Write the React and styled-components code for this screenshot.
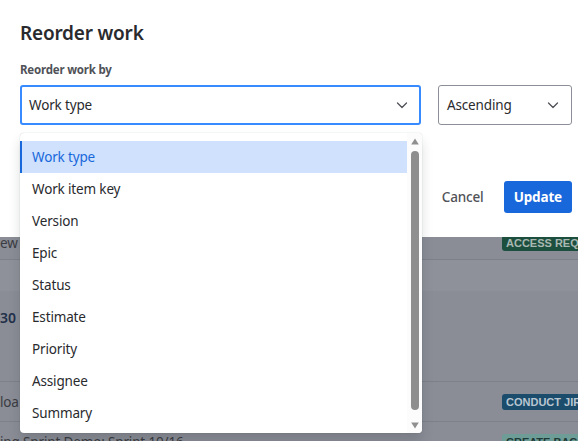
import React from 'react'
import styled, { createGlobalStyle } from 'styled-components'

const GlobalStyle = createGlobalStyle`
  html, body { margin: 0; padding: 0; }
  body {
    font-family: "Noto Sans", "Open Sans", sans-serif;
    color: #292a2e;
  }
  * { box-sizing: border-box; }
`

const fields = [
  'Work type',
  'Work item key',
  'Version',
  'Epic',
  'Status',
  'Estimate',
  'Priority',
  'Assignee',
  'Summary',
]

const Chevron = () => (
  <svg width="12" height="12" viewBox="0 0 12 12" fill="none">
    <path d="M1.5 4l4.5 4.5L10.5 4" stroke="#505258" strokeWidth="1.3" strokeLinecap="round" strokeLinejoin="round" />
  </svg>
)

const Arrow = ({ down }) => (
  <svg width="8" height="7" viewBox="0 0 8 7" style={down ? { transform: 'rotate(180deg)' } : undefined}>
    <path d="M4 0.5L7.8 6.5H0.2z" fill="#8f8f8f" />
  </svg>
)

export default function App() {
  return (
    <>
      <GlobalStyle />
      <Page>
        <Board>
          <Row h={34}>
            <Summary>ew b</Summary>
            <Badge tone="green">ACCESS REQU</Badge>
          </Row>
          <Row h={122} tall>
            <Band />
            <Body>
              <Key>30</Key>
            </Body>
          </Row>
          <Row h={40}>
            <Summary>loa</Summary>
            <Badge tone="blue">CONDUCT JIR</Badge>
          </Row>
          <Row h={40}>
            <Summary>ing Sprint Demo: Sprint 10/16</Summary>
            <Badge tone="teal">CREATE BAC</Badge>
          </Row>
        </Board>

        <Modal>
          <Title>Reorder work</Title>
          <Label>Reorder work by</Label>
          <Fields>
            <Select width={401} focused>
              <span>Work type</span>
              <IconSlot><Chevron /></IconSlot>
            </Select>
            <Select width={134}>
              <span>Ascending</span>
              <IconSlot><Chevron /></IconSlot>
            </Select>
          </Fields>
          <Actions>
            <Button>Cancel</Button>
            <Button primary>Update</Button>
          </Actions>
        </Modal>

        <Menu>
          <List>
            {fields.map((f, i) => (
              <Option key={f} selected={i === 0}>{f}</Option>
            ))}
          </List>
          <Scrollbar>
            <Arrow />
            <Thumb />
            <Arrow down />
          </Scrollbar>
        </Menu>
      </Page>
    </>
  )
}

const Page = styled.div`
  position: relative;
  width: 578px;
  height: 441px;
  overflow: hidden;
  background: #8a8d96;
`

const Board = styled.div`
  display: flex;
  flex-direction: column;
  padding-top: 226px;
`

const Row = styled.div`
  display: ${p => (p.tall ? 'flex' : 'grid')};
  flex-direction: column;
  grid-template-columns: 502px 1fr;
  align-items: center;
  height: ${p => p.h}px;
  flex-shrink: 0;
  border-bottom: 1px solid #7d8089;
`

const Band = styled.div`
  align-self: stretch;
  height: 31px;
  background: #8e9199;
`

const Body = styled.div`
  align-self: stretch;
  flex: 1;
  padding-top: 15px;
`

const Summary = styled.span`
  font-size: 13.5px;
  letter-spacing: -0.15px;
  color: #3a3c42;
  white-space: nowrap;
`

const Key = styled.span`
  font-size: 14px;
  font-weight: 600;
  color: #22304a;
`

const badgeTones = {
  green: { bg: '#1d4f3f', fg: '#a9b8b2' },
  blue: { bg: '#1b4c6b', fg: '#b9c6d1' },
  teal: { bg: '#6e9d97', fg: '#1e3a37' },
}

const Badge = styled.span`
  justify-self: start;
  padding: 0 4px;
  height: 16px;
  line-height: 16px;
  border-radius: 3px;
  font-family: "Liberation Sans", sans-serif;
  font-size: 11px;
  font-weight: 700;
  white-space: nowrap;
  background: ${p => badgeTones[p.tone].bg};
  color: ${p => badgeTones[p.tone].fg};
`

const Modal = styled.div`
  position: absolute;
  top: 0;
  left: 0;
  right: 0;
  height: 237px;
  background: #fff;
  padding: 21px 6px 0 20px;
  display: flex;
  flex-direction: column;
`

const Title = styled.h2`
  margin: 0;
  font-size: 19px;
  letter-spacing: -0.2px;
  line-height: 24px;
  font-weight: 600;
  color: #292a2e;
`

const Label = styled.label`
  margin-top: 17px;
  font-size: 11.5px;
  letter-spacing: -0.2px;
  line-height: 16px;
  font-weight: 700;
  color: #505258;
`

const Fields = styled.div`
  display: flex;
  gap: 17px;
  margin-top: 7px;
`

const Select = styled.div`
  width: ${p => p.width}px;
  height: 40px;
  display: flex;
  align-items: center;
  justify-content: space-between;
  border-radius: 3px;
  border: ${p => (p.focused ? '2px solid #388bff' : '1px solid #8c8f97')};
  padding-left: ${p => (p.focused ? 7 : 8)}px;
  padding-right: ${p => (p.focused ? 5 : 6)}px;
  font-size: 13.5px;
  letter-spacing: -0.15px;
  color: #292a2e;
`

const IconSlot = styled.span`
  width: 24px;
  height: 24px;
  display: flex;
  align-items: center;
  justify-content: center;
`

const Actions = styled.div`
  display: flex;
  justify-content: flex-end;
  gap: 10px;
  margin-top: 56px;
`

const Button = styled.button`
  height: 32px;
  padding: 0 10px;
  border: none;
  border-radius: 3px;
  font-family: inherit;
  font-size: 13.5px;
  letter-spacing: -0.15px;
  font-weight: ${p => (p.primary ? 700 : 500)};
  background: ${p => (p.primary ? '#1868db' : 'transparent')};
  color: ${p => (p.primary ? '#fff' : '#505258')};
`

const Menu = styled.div`
  position: absolute;
  top: 133px;
  left: 20px;
  width: 402px;
  height: 300px;
  display: flex;
  background: #fff;
  border-radius: 4px;
  overflow: hidden;
  box-shadow: 0 0 1px rgba(30, 31, 33, 0.31), 0 8px 12px rgba(30, 31, 33, 0.15);
`

const List = styled.div`
  flex: 1;
  padding-top: 8px;
  display: flex;
  flex-direction: column;
`

const Option = styled.div`
  height: 32px;
  flex-shrink: 0;
  display: flex;
  align-items: center;
  padding-left: 12px;
  font-size: 13.5px;
  letter-spacing: -0.15px;
  color: ${p => (p.selected ? '#1868db' : '#292a2e')};
  background: ${p => (p.selected ? '#cfe1fd' : 'transparent')};
  box-shadow: ${p => (p.selected ? 'inset 2px 0 0 #1868db' : 'none')};
`

const Scrollbar = styled.div`
  width: 15px;
  display: flex;
  flex-direction: column;
  align-items: center;
  padding-top: 5px;
  background: #fcfcfc;
`

const Thumb = styled.div`
  width: 8px;
  height: 259px;
  margin: 6px 0 12px;
  border-radius: 4px;
  background: #8f8f8f;
`
